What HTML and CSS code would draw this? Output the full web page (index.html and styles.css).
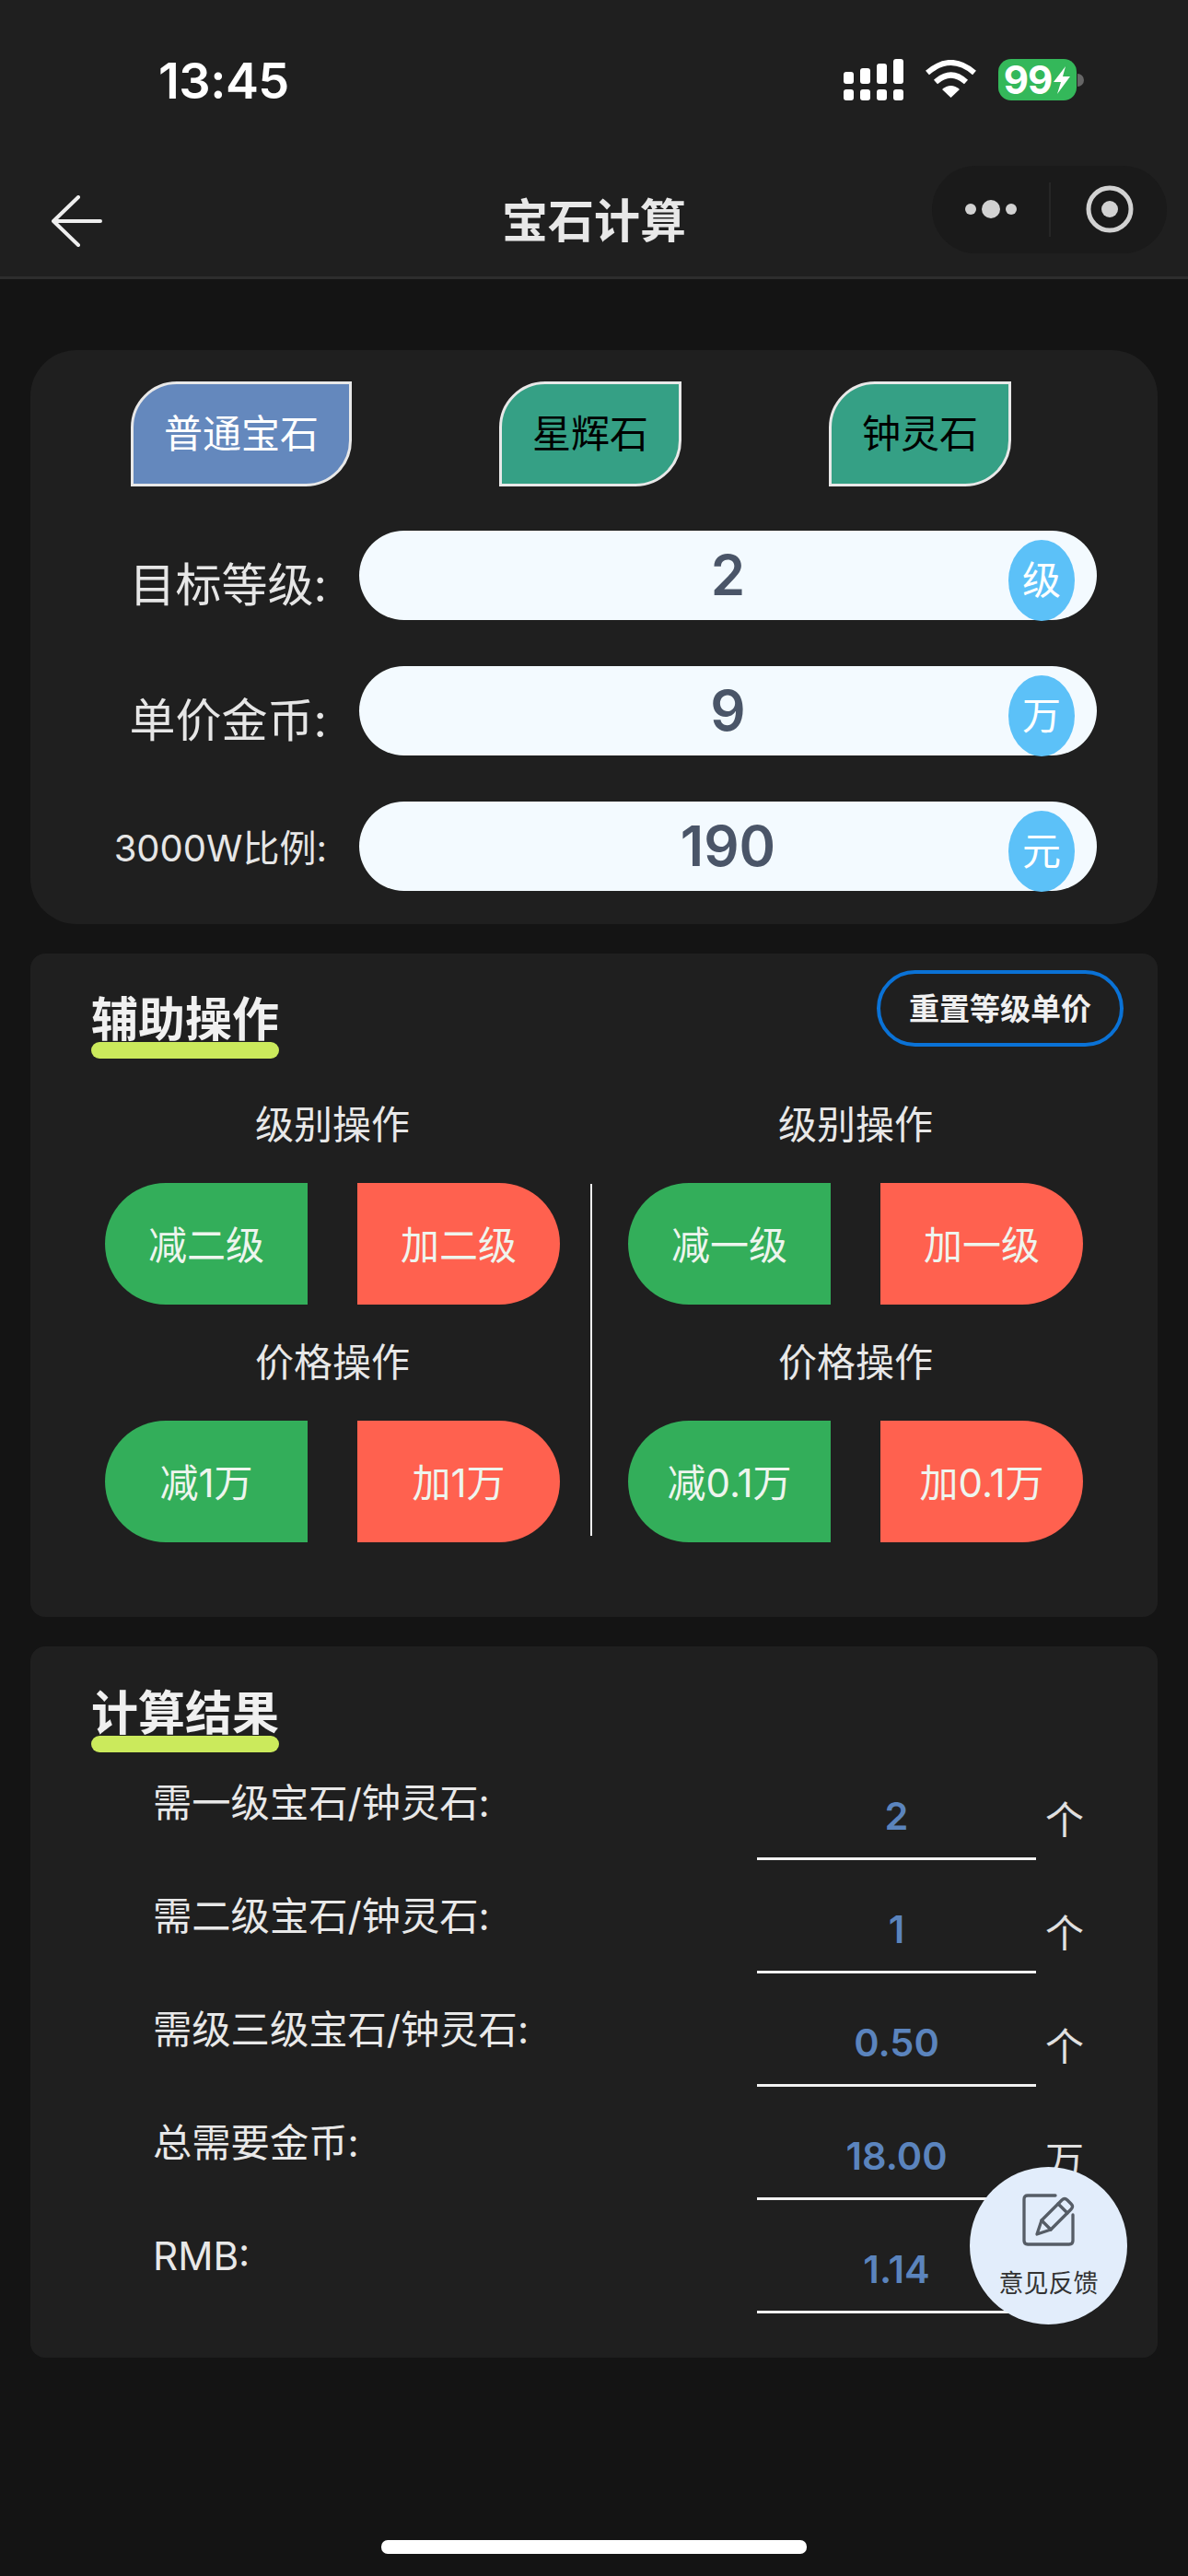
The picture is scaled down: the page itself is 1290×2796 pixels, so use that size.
FILE: index.html
```html
<!DOCTYPE html>
<html lang="zh-CN">
<head>
<meta charset="utf-8">
<title>宝石计算</title>
<link rel="stylesheet" href="styles.css">
</head>
<body>
<div class="page">
  <header class="top">
    <div class="status">
      <span class="time">13:45</span>
      <div class="status-icons">
        <svg class="signal" width="65" height="45" viewBox="0 0 65 45" fill="#fff">
          <rect x="0" y="14" width="11" height="13" rx="3"/><rect x="18" y="10" width="11" height="17" rx="3"/><rect x="36" y="5" width="11" height="22" rx="3"/><rect x="54" y="0" width="11" height="27" rx="3"/>
          <rect x="0" y="33" width="11" height="12" rx="3"/><rect x="18" y="33" width="11" height="12" rx="3"/><rect x="36" y="33" width="11" height="12" rx="3"/><rect x="54" y="33" width="11" height="12" rx="3"/>
        </svg>
        <svg class="wifi" width="57" height="41" viewBox="0 0 57 41" fill="none" stroke="#fff" stroke-width="6">
          <path d="M3 14 Q28.500 -8 54 14"/><path d="M12 24 Q28.500 9 45 24"/><path d="M19 32 Q28.500 24 38 32 L28.500 41 Z" fill="#fff" stroke="none"/>
        </svg>
        <div class="battery-wrap">
          <div class="battery"><span>99</span>
            <svg width="20" height="30" viewBox="0 0 20 30" fill="#fff"><path d="M14 0 L1 17 H9 L5 30 L19 11 H11 Z"/></svg>
          </div>
          <i class="nub"></i>
        </div>
      </div>
    </div>
    <nav class="nav">
      <svg class="back" width="55" height="56" viewBox="0 0 55 56" fill="none" stroke="#eee" stroke-width="4" stroke-linecap="round" stroke-linejoin="round">
        <path d="M29 2 L2 28 L29 54 M2 28 H53"/>
      </svg>
      <h1 class="nav-title">宝石计算</h1>
      <div class="capsule">
        <svg width="255" height="95" viewBox="0 0 255 95">
          <circle cx="42" cy="47" r="6" fill="#d2d2d2"/><circle cx="64" cy="47" r="10" fill="#d2d2d2"/><circle cx="86" cy="47" r="6" fill="#d2d2d2"/>
          <path d="M128 18 V77" stroke="#333" stroke-width="1"/>
          <circle cx="193" cy="47" r="23" fill="none" stroke="#d2d2d2" stroke-width="5"/><circle cx="193" cy="47" r="9" fill="#d2d2d2"/>
        </svg>
      </div>
    </nav>
  </header>

  <main class="main">
    <section class="card card-form">
      <div class="tabs">
        <div class="tab tab-blue">普通宝石</div>
        <div class="tab tab-green">星辉石</div>
        <div class="tab tab-green">钟灵石</div>
      </div>
      <div class="field">
        <label class="field-label">目标等级:</label>
        <div class="field-input">2<span class="badge">级</span></div>
      </div>
      <div class="field">
        <label class="field-label">单价金币:</label>
        <div class="field-input">9<span class="badge">万</span></div>
      </div>
      <div class="field">
        <label class="field-label field-label-small">3000W比例:</label>
        <div class="field-input">190<span class="badge">元</span></div>
      </div>
    </section>

    <section class="card card-ops">
      <div class="ops-head">
        <h2 class="section-title">辅助操作</h2>
        <div class="reset">重置等级单价</div>
      </div>
      <div class="ops">
        <div class="ops-col">
          <div class="ops-name">级别操作</div>
          <div class="btn btn-minus">减二级</div>
          <div class="btn btn-plus">加二级</div>
          <div class="ops-name">价格操作</div>
          <div class="btn btn-minus">减1万</div>
          <div class="btn btn-plus">加1万</div>
        </div>
        <div class="ops-divider"></div>
        <div class="ops-col">
          <div class="ops-name">级别操作</div>
          <div class="btn btn-minus">减一级</div>
          <div class="btn btn-plus">加一级</div>
          <div class="ops-name">价格操作</div>
          <div class="btn btn-minus">减0.1万</div>
          <div class="btn btn-plus">加0.1万</div>
        </div>
      </div>
    </section>

    <section class="card card-result">
      <h2 class="section-title">计算结果</h2>
      <div class="rows">
        <div class="row"><span class="row-label">需一级宝石/钟灵石:</span><span class="row-value">2</span><span class="row-unit">个</span></div>
        <div class="row"><span class="row-label">需二级宝石/钟灵石:</span><span class="row-value">1</span><span class="row-unit">个</span></div>
        <div class="row"><span class="row-label">需级三级宝石/钟灵石:</span><span class="row-value">0.50</span><span class="row-unit">个</span></div>
        <div class="row"><span class="row-label">总需要金币:</span><span class="row-value">18.00</span><span class="row-unit">万</span></div>
        <div class="row"><span class="row-label">RMB:</span><span class="row-value">1.14</span></div>
      </div>
    </section>
  </main>

  <div class="feedback">
    <svg width="57" height="57" viewBox="0 0 57 57" fill="none" stroke="#565d66" stroke-width="3.300" stroke-linecap="round" stroke-linejoin="round">
      <path d="M36 2 H6 Q2 2 2 6 V51 Q2 55 6 55 H51 Q55 55 55 51 V23"/>
      <path d="M16 44 L21 29 L43 7 Q46 4 49 7 L53 11 Q56 14 53 17 L31 39 Z"/>
      <path d="M21 29 L31 39 M39 11 L49 21"/>
    </svg>
    <span class="feedback-text">意见反馈</span>
  </div>
  <div class="home-bar"></div>
</div>
</body>
</html>
```
FILE: styles.css
```css
* { box-sizing: border-box; }
html, body { margin: 0; padding: 0; }
body {
  background: #141414;
  font-family: Inter, "Noto Sans CJK SC", sans-serif;
  color: #e8e8e8;
}
.page { position: relative; width: 1290px; height: 2796px; overflow: hidden; background: #141414; }

.top { height: 303px; background: #1f1f1f; border-bottom: 3px solid #2d2d2d; }
.status { height: 170px; padding: 64px 113px 0 172px; display: flex; justify-content: space-between; align-items: flex-start; }
.time { font-size: 54px; font-weight: 600; line-height: 48px; color: #fff; letter-spacing: -0.500px; }
.status-icons { display: flex; gap: 23px; align-items: center; height: 45px; }
.signal { display: block; }
.wifi { display: block; margin-top: -2px; }
.battery-wrap { display: flex; align-items: center; gap: 1px; }
.battery { width: 85px; height: 45px; border-radius: 14px; background: #34b85a; display: flex; align-items: center; justify-content: center; gap: 1px; color: #fff; font-size: 42px; font-weight: 700; letter-spacing: -1px; line-height: 45px; }
.nub { display: block; width: 7px; height: 14px; background: #666; border-radius: 0 7px 7px 0; }

.nav { height: 130px; padding: 10px 23px 0; display: grid; grid-template-columns: 1fr auto 1fr; align-items: start; }
.back { display: block; margin: 32px 0 0 33px; }
.nav-title { margin: 30px 0 0; font-size: 50px; line-height: 60px; font-weight: 700; color: #e8e8e8; }
.capsule { justify-self: end; width: 255px; height: 95px; border-radius: 48px; background: #1a1a1a; }
.capsule svg { display: block; }

.main { padding: 77px 33px 0; display: flex; flex-direction: column; gap: 32px; }
.card { background: #1f1f1f; border-radius: 16px; }

.card-form { height: 623px; padding: 34px 0 0 109px; border-radius: 50px; }
.tabs { display: flex; gap: 160px; margin-bottom: 48px; }
.tab { width: 198px; height: 114px; display: flex; align-items: center; justify-content: center; font-size: 42px; line-height: 60px; border: 3px solid #e8e8e8; border-radius: 50px 0 50px 0; color: #000; }
.tab-blue { width: 240px; background: #6488bd; color: #fff; }
.tab-green { background: #35a085; }
.field { display: flex; margin: 0 0 50px -109px; }
.field-label { width: 322px; margin-top: 24px; text-align: right; font-size: 50px; line-height: 70px; font-weight: 400; color: #e6e6e6; }
.field-label-small { font-size: 40px; margin-top: 16px; }
.field-input { position: relative; margin-left: 35px; width: 801px; height: 97px; border-radius: 49px; background: #f3faff; color: #4a5568; text-align: center; font-size: 60px; font-weight: 600; line-height: 97px; }
.badge { position: absolute; right: 24px; top: 10px; width: 72px; height: 88px; border-radius: 50%; background: #5cc1f8; color: #fff; font-size: 42px; font-weight: 400; line-height: 88px; text-align: center; }

.card-ops { height: 720px; padding: 18px 37px 0 66px; }
.ops-head { display: flex; justify-content: space-between; align-items: flex-start; }
.section-title { margin: 29px 0 0; width: 204px; font-size: 51px; line-height: 49px; font-weight: 700; color: #f0f0f0; white-space: nowrap; text-align: center; }
.section-title::after { content: ""; display: block; height: 18px; border-radius: 9px; background: #cbea5c; }
.reset { width: 268px; height: 83px; padding-bottom: 4px; border: 4px solid #0a72d6; border-radius: 42px; display: flex; align-items: center; justify-content: center; font-size: 33px; font-weight: 600; color: #f0f0f0; }
.ops { display: flex; margin: 42px 0 0 15px; }
.ops-col { display: grid; grid-template-columns: 220px 220px; column-gap: 54px; align-content: start; }
.ops-name { grid-column: 1 / -1; height: 60px; margin-bottom: 33px; text-align: center; font-size: 42px; line-height: 60px; color: #e8e8e8; }
.btn { height: 132px; margin-bottom: 33px; padding-bottom: 4px; display: flex; align-items: center; justify-content: center; font-size: 42px; color: #eef5ee; }
.btn-minus { background: #33ae5a; border-radius: 66px 0 0 66px; }
.btn-plus { background: #ff614f; border-radius: 0 66px 66px 0; }
.ops-divider { width: 2px; height: 382px; margin: 94px 39px 0 33px; background: #eee; }

.card-result { height: 772px; padding: 19px 0 0 66px; }
.rows { margin: 17px 0 0 67px; display: flex; flex-direction: column; gap: 23px; }
.row { display: flex; height: 100px; align-items: flex-start; }
.row-label { width: 656px; margin-top: 8px; font-size: 42.300px; line-height: 60px; color: #e8e8e8; }
.row-value { width: 303px; height: 100px; padding-top: 22px; border-bottom: 3px solid #f2f2f2; text-align: center; font-size: 41.500px; font-weight: 600; line-height: 60px; color: #5b84bd; }
.row-unit { margin: 27px 0 0 10px; font-size: 42px; line-height: 60px; color: #e0e0e0; }

.feedback { position: absolute; left: 1053px; top: 2352px; width: 171px; height: 171px; border-radius: 50%; background: #e2edfb; display: flex; flex-direction: column; align-items: center; padding-top: 29px; }
.feedback svg { display: block; overflow: visible; }
.feedback-text { margin-top: 23px; font-size: 27px; line-height: 36px; color: #333; }
.home-bar { position: absolute; left: 414px; top: 2757px; width: 462px; height: 15px; border-radius: 7px; background: #fff; }
```
